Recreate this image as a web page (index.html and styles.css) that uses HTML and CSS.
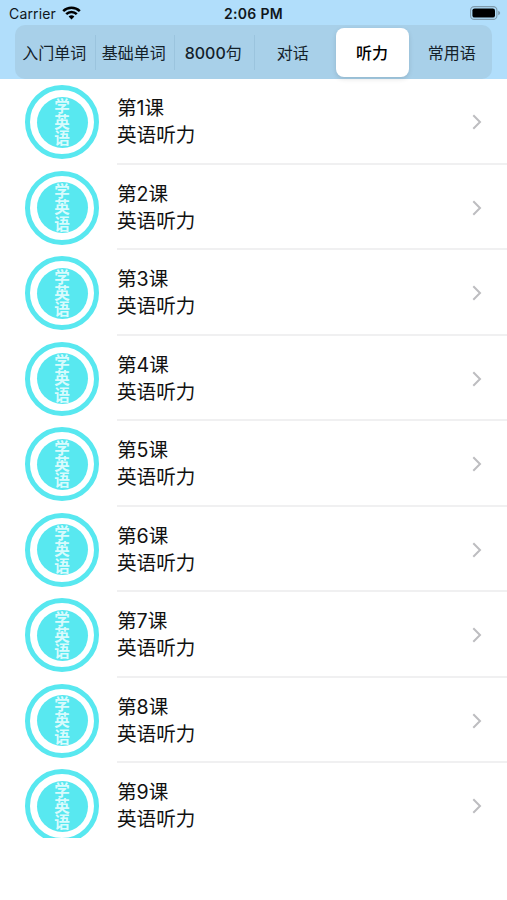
FILE: index.html
```
<!DOCTYPE html>
<html lang="zh-CN">
<head>
<meta charset="utf-8">
<title>英语听力</title>
<link rel="stylesheet" href="styles.css">
</head>
<body>
<header class="header">
  <div class="status">
    <div class="carrier"><span>Carrier</span>
      <svg class="wifi" width="19" height="14" viewBox="0 0 19 14" fill="none" stroke="#000" stroke-width="2.5"><path d="M1.2 5.1a11.8 11.8 0 0 1 16.6 0M4.2 8.2a7.5 7.5 0 0 1 10.6 0"/><path d="M9.5 13.5 6.6 10.6a4.1 4.1 0 0 1 5.8 0z" fill="#000" stroke="none"/></svg>
    </div>
    <div class="time">2:06 PM</div>
    <svg class="battery" width="31" height="14" viewBox="0 0 31 14"><rect x=".6" y=".6" width="26.3" height="12.8" rx="3.7" fill="none" stroke="#7f9bad" stroke-width="1.1"/><rect x="2.4" y="2.4" width="22.6" height="9.2" rx="2.2"/><path d="M28.2 4.7q2 .7 2 2.3t-2 2.3z" fill="#7f9bad"/></svg>
  </div>
  <nav class="segments">
    <div class="segment">入门单词</div>
    <div class="segment divided">基础单词</div>
    <div class="segment divided"><span><b>8000</b>句</span></div>
    <div class="segment divided">对话</div>
    <div class="segment selected">听力</div>
    <div class="segment">常用语</div>
  </nav>
</header>
<main class="list" id="list"></main>
<template id="row">
  <div class="row">
    <div class="badge"><div class="disc"><span>学</span><span>英</span><span>语</span></div></div>
    <div class="content">
      <div class="text"><div class="lesson"></div><div>英语听力</div></div>
      <svg class="chevron" width="10" height="16" viewBox="0 0 10 16" fill="none" stroke="#bdbdc0" stroke-width="2"><path d="M1.3 1.3 8 8l-6.7 6.7"/></svg>
    </div>
  </div>
</template>
<script src="list.js"></script>
</body>
</html>
```
FILE: styles.css
```
* { box-sizing: border-box; }
body {
  margin: 0;
  height: 900px;
  overflow: hidden;
  background: #fff;
  color: #111;
  font-family: Inter, "Noto Sans CJK SC", sans-serif;
}
.header {
  height: 79.3px;
  background: #b1defb;
}
.status {
  display: grid;
  grid-template-columns: 1fr auto 1fr;
  align-items: center;
  height: 25px;
  padding: 2px 6px 0 9px;
  font-size: 14px;
  color: #10171c;
}
.carrier { display: flex; align-items: center; gap: 6px; }
.carrier span { letter-spacing: 0.15px; }
.wifi { display: block; margin-top: -2px; }
.time { margin-left: -3px; font-weight: 600; font-size: 14px; letter-spacing: 0.3px; }
.battery { display: block; justify-self: end; margin-top: -1px; }
.segments {
  display: grid;
  grid-template-columns: repeat(6, 79.5px);
  width: 477px;
  height: 54px;
  margin-left: 15px;
  border-radius: 10px;
  background: #a8d0e9;
}
.segment {
  display: flex;
  align-items: center;
  justify-content: center;
  height: 54px;
  padding-right: 1px;
  font-size: 16px;
  color: #14212a;
  white-space: nowrap;
}
.segment b { font-weight: 500; }
.divided {
  background: linear-gradient(#9bc4de, #9bc4de) left center / 1px 35px no-repeat;
}
.selected {
  height: 49px;
  margin: 2.5px 3.3px 2.5px 2.7px;
  border-radius: 8px;
  background: #fff;
  color: #000;
  font-weight: 500;
  box-shadow: 0 2px 5px rgba(0, 0, 0, 0.12);
}
.list { height: 758.5px; overflow: hidden; }
.row {
  display: flex;
  align-items: center;
  height: 85.5px;
  padding-left: 25px;
}
.badge {
  display: grid;
  place-items: center;
  width: 74px;
  height: 74px;
  border: 5px solid #58e8f0;
  border-radius: 50%;
}
.disc {
  display: flex;
  flex-direction: column;
  align-items: center;
  justify-content: center;
  width: 51px;
  height: 51px;
  padding-bottom: 2px;
  border-radius: 50%;
  background: #58e8f0;
  color: #d8fbfd;
  font-family: "Noto Sans CJK SC", sans-serif;
  font-size: 15.5px;
  font-weight: 700;
  line-height: 16.3px;
}
.content {
  display: flex;
  flex: 1;
  align-items: center;
  justify-content: space-between;
  height: 100%;
  margin-left: 18px;
  padding-right: 25px;
  background: linear-gradient(#f0f0f1, #f0f0f1) left bottom / 100% 2px no-repeat;
}
.row:last-child .content { background: none; }
.text { font-size: 19.6px; line-height: 27px; }
.chevron { display: block; }
```
FILE: list.js
```
const list = document.getElementById("list");
const template = document.getElementById("row");
for (let n = 1; n <= 9; n++) {
  const row = template.content.cloneNode(true);
  row.querySelector(".lesson").textContent = `第${n}课`;
  list.append(row);
}
```
